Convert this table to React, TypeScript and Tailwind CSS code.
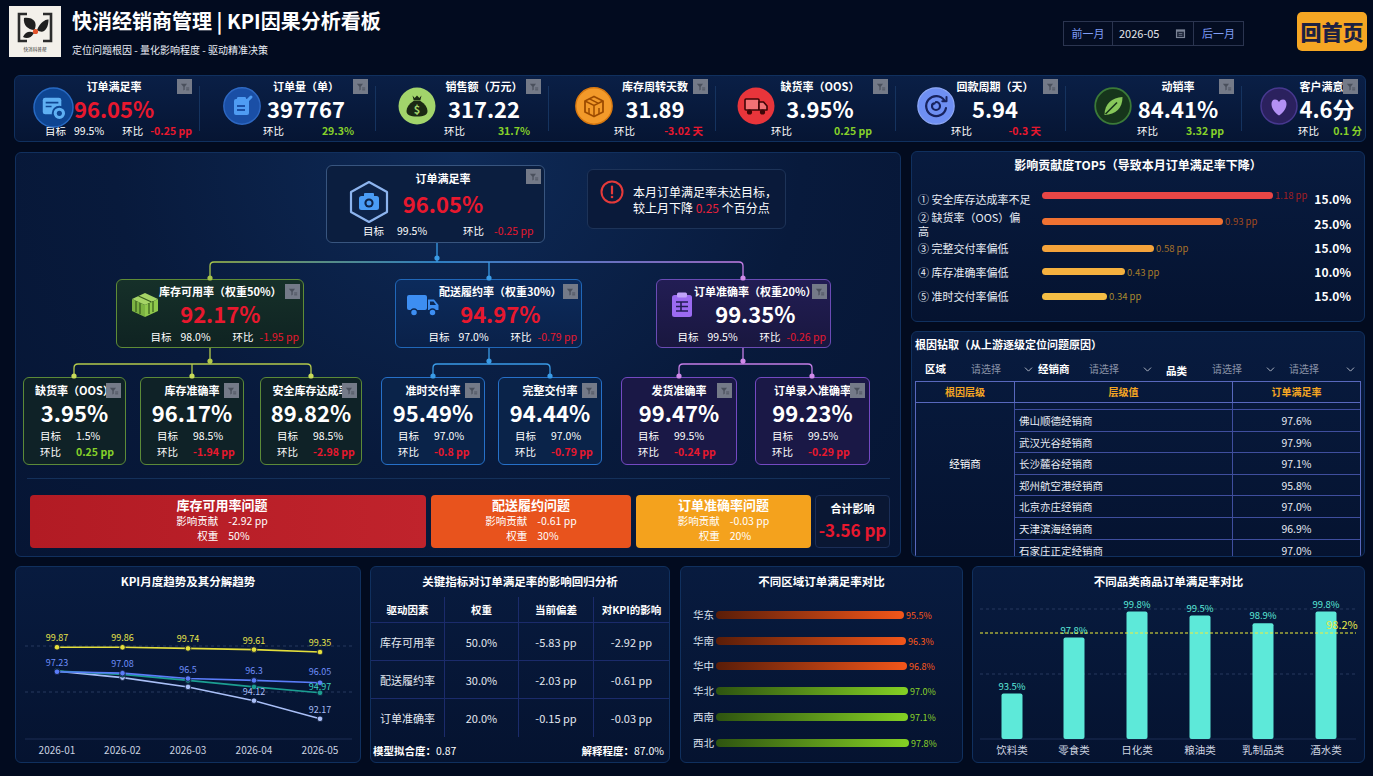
import { Fragment, type ReactNode } from "react";
import { ChevronDown } from "lucide-react";

type Tone = "red" | "green" | "white";

const toneText: Record<Tone, string> = {
  red: "text-[#e8182e]",
  green: "text-[#86d12a]",
  white: "text-white",
};

/* ---------- small drawings ---------- */

function FilterBadge({ className = "" }: { className?: string }) {
  return (
    <span className={`absolute flex h-[15px] w-[15px] items-center justify-center bg-[#747a88] ${className}`}>
      <svg viewBox="0 0 12 12" className="h-[10px] w-[10px]">
        <path d="M1 2.2h7.4L5.6 5.8v3.4l-1.5.9V5.8z" fill="#4a505c" />
        <path d="M7.4 7.2h3.6M7.4 9.4h3.6" stroke="#4a505c" strokeWidth="1.1" />
      </svg>
    </span>
  );
}

function Logo() {
  return (
    <div className="ml-[9px] mt-[6px] h-[51px] w-[52px] shrink-0 bg-[#f3f0ea]">
      <svg viewBox="0 0 52 51" className="h-full w-full">
        <path d="M18 8H10V35H18M34 8H42V35H34" stroke="#2b2b2b" strokeWidth="2.6" fill="none" />
        <path d="M15 12C24 11 29 16 25.5 24C18.5 23.5 14 19 15 12Z" fill="#1f1f1f" />
        <path d="M28 24C31 16 37 13 39.5 13.5C39.5 22 35 29 28 24Z" fill="#1f1f1f" />
        <path d="M14 31C16 26 21 24.5 25 27C22 32.5 17.5 33 14 31Z" fill="#1f1f1f" />
        <circle cx="26.5" cy="25.5" r="2.6" fill="#e4532b" />
        <text x="26" y="44.5" fontSize="4.6" textAnchor="middle" fill="#333">快消科普帮</text>
      </svg>
    </div>
  );
}

function CalendarGlyph() {
  return (
    <svg viewBox="0 0 12 12" className="h-[11px] w-[11px]">
      <rect x="1" y="1.5" width="10" height="9.5" fill="#7c8497" />
      <rect x="2.3" y="4" width="7.4" height="5.8" fill="#1f273b" />
      <path d="M4 6h4M4 8h4" stroke="#7c8497" strokeWidth="0.8" />
    </svg>
  );
}

const icoFulfil = (
  <svg viewBox="0 0 42 42" className="h-[41px] w-[41px]">
    <circle cx="21" cy="21" r="20" fill="#0e4592" stroke="#2769c2" strokeWidth="1.5" />
    <rect x="10" y="11" width="19" height="17" rx="2.5" fill="#5fb0f3" />
    <path d="M13 16h13M13 20h6" stroke="#0e4592" strokeWidth="1.7" />
    <circle cx="27" cy="27" r="6.8" fill="#5fb0f3" stroke="#0e4592" strokeWidth="2" />
    <circle cx="27" cy="27" r="2.6" fill="#0e4592" />
  </svg>
);

const icoOrders = (
  <svg viewBox="0 0 38 38" className="h-[38px] w-[38px]">
    <circle cx="19" cy="19" r="18.2" fill="#1a4fa6" stroke="#2e68c2" strokeWidth="1.4" />
    <rect x="11" y="12" width="15" height="16" rx="2" fill="#4f9cf3" />
    <rect x="14" y="10" width="9" height="4" rx="1.2" fill="#4f9cf3" />
    <path d="M14 19h8M14 23h8" stroke="#1a4fa6" strokeWidth="1.8" />
    <path d="M22.5 15.5l5.5-5.5" stroke="#4f9cf3" strokeWidth="3" strokeLinecap="round" />
  </svg>
);

const icoSales = (
  <svg viewBox="0 0 38 38" className="h-[38px] w-[38px]">
    <circle cx="19" cy="19" r="18.5" fill="#a2d46b" />
    <path d="M14.5 8.5l2.2 2.5 2.3-2.5 2.3 2.5 2.2-2.5-1.2 5h-6.6z" fill="#1c2914" />
    <path d="M15.5 14h7c4.5 3 7 6.5 7 10 0 4-3.5 5.5-10.5 5.5S8.5 28 8.5 24c0-3.5 2.5-7 7-10z" fill="#1c2914" />
    <text x="19" y="26.5" textAnchor="middle" fontSize="11" fontWeight="700" fill="#a2d46b">$</text>
  </svg>
);

const icoStock = (
  <svg viewBox="0 0 38 38" className="h-[38px] w-[38px]">
    <circle cx="19" cy="19" r="18.2" fill="#f39a2a" stroke="#d8780f" strokeWidth="1.4" />
    <path d="M10 14l9-4.5 9 4.5v11l-9 4.5-9-4.5z" fill="none" stroke="#9c4b00" strokeWidth="1.8" strokeLinejoin="round" />
    <path d="M10 14l9 4.5 9-4.5M19 18.5v11M14.5 11.8l9 4.5M14 21v6M24 21v6" fill="none" stroke="#9c4b00" strokeWidth="1.5" />
  </svg>
);

const icoTruckRed = (
  <svg viewBox="0 0 38 38" className="h-[38px] w-[38px]">
    <circle cx="19" cy="19" r="18.5" fill="#e8353b" />
    <rect x="8" y="12" width="14" height="11" rx="1" fill="#f27275" stroke="#3d0607" strokeWidth="1.6" />
    <path d="M22 15h4.5l3.5 4v4h-8z" fill="#f27275" stroke="#3d0607" strokeWidth="1.6" strokeLinejoin="round" />
    <circle cx="12.5" cy="25" r="2.6" fill="#3d0607" />
    <circle cx="25.5" cy="25" r="2.6" fill="#3d0607" />
  </svg>
);

const icoCycle = (
  <svg viewBox="0 0 38 38" className="h-[38px] w-[38px]">
    <circle cx="19" cy="19" r="18.2" fill="#6e8ff3" stroke="#8ea8f6" strokeWidth="1.2" />
    <path d="M27.5 13.5A10 10 0 1 0 29 21" fill="none" stroke="#18235e" strokeWidth="2.2" strokeLinecap="round" />
    <path d="M29.5 10v4.2h-4.2" fill="none" stroke="#18235e" strokeWidth="2" strokeLinecap="round" strokeLinejoin="round" />
    <path d="M19 15a4 4 0 1 1-4 4c0-1.6 1.2-2.6 2.6-2.6" fill="none" stroke="#18235e" strokeWidth="2.2" strokeLinecap="round" />
  </svg>
);

const icoLeaf = (
  <svg viewBox="0 0 38 38" className="h-[38px] w-[38px]">
    <circle cx="19" cy="19" r="17.8" fill="#16351b" stroke="#3b7a38" strokeWidth="1.8" />
    <path d="M10.5 28C10.5 17 18 10.5 28.5 10C28.5 21 22 27.5 10.5 28Z" fill="#87c75a" />
    <path d="M11.5 27L23 15.5" stroke="#16351b" strokeWidth="1.6" />
  </svg>
);

const icoHeart = (
  <svg viewBox="0 0 38 38" className="h-[38px] w-[38px]">
    <circle cx="19" cy="19" r="18" fill="#2b215e" stroke="#47388f" strokeWidth="1.5" />
    <path d="M19 28.5C9.5 22 10 12.5 15 12.5c2.2 0 3.4 1.3 4 2.6.6-1.3 1.8-2.6 4-2.6 5 0 5.5 9.5-4 16z" fill="#b391f4" />
  </svg>
);

const hexCamera = (
  <svg viewBox="0 0 44 44" className="h-[44px] w-[44px]">
    <path d="M22 2L40 12V32L22 42L4 32V12Z" fill="#0d2349" stroke="#8db4ee" strokeWidth="2.2" strokeLinejoin="round" />
    <rect x="12" y="16" width="20" height="14" rx="2.5" fill="#4a9cf5" />
    <rect x="17" y="13" width="10" height="4.5" rx="1" fill="#4a9cf5" />
    <circle cx="22" cy="23" r="4.6" fill="#0d2349" />
    <circle cx="22" cy="23" r="2.5" fill="#4a9cf5" />
  </svg>
);

const greenCrate = (
  <svg viewBox="0 0 28 26" className="h-[26px] w-[28px]">
    <path d="M14 1L27 7L14 13L1 7Z" fill="#a5d466" />
    <path d="M1 7L14 13V25L1 19Z" fill="#7cb342" />
    <path d="M14 13L27 7V19L14 25Z" fill="#8fc84c" />
    <path d="M5 9v11M9 11v11M18 11v11M22 9v11M7.5 4l13 6" stroke="#365a1c" strokeWidth="1.2" />
  </svg>
);

const blueTruck = (
  <svg viewBox="0 0 32 24" className="h-[24px] w-[32px]">
    <rect x="0" y="2" width="20" height="15" rx="2" fill="#3d8ef2" />
    <path d="M21 6.5H27L31.5 12V17H21Z" fill="#3d8ef2" />
    <path d="M23 8.5H26.5L29 12H23Z" fill="#0b2652" />
    <circle cx="7" cy="19.5" r="3.5" fill="#3d8ef2" stroke="#0b2652" strokeWidth="1.5" />
    <circle cx="25.5" cy="19.5" r="3.5" fill="#3d8ef2" stroke="#0b2652" strokeWidth="1.5" />
  </svg>
);

const purpleClip = (
  <svg viewBox="0 0 24 26" className="h-[26px] w-[24px]">
    <rect x="2" y="3" width="20" height="22" rx="2.5" fill="#9b6bf1" />
    <rect x="7" y="0.5" width="10" height="5" rx="1.5" fill="#c0a3fa" />
    <path d="M6 10h12M6 14.5h12M6 19h12M11 10v9" stroke="#221d55" strokeWidth="1.6" />
  </svg>
);

function AlertGlyph() {
  return (
    <svg viewBox="0 0 24 24" className="mt-[-4px] h-[24px] w-[24px] shrink-0">
      <circle cx="12" cy="12" r="10.5" stroke="#e53a3a" strokeWidth="2" fill="none" />
      <path d="M12 6.5v7" stroke="#e53a3a" strokeWidth="2.2" strokeLinecap="round" />
      <circle cx="12" cy="17" r="1.3" fill="#e53a3a" />
    </svg>
  );
}

/* ---------- header ---------- */

function Header() {
  return (
    <header className="flex h-[70px] items-start">
      <Logo />
      <div className="ml-[11px] mt-[8px]">
        <h1 className="text-[20px] font-bold leading-[26px]">快消经销商管理 | KPI因果分析看板</h1>
        <p className="mt-[9px] text-[10px] leading-[13px] text-[#e8ecf4]">定位问题根因 - 量化影响程度 - 驱动精准决策</p>
      </div>
      <div className="ml-auto mt-[21px] flex h-[25px] border border-[#2b3550] bg-[#040d22] text-[11px] leading-[23px]">
        <button className="w-[49px] border-r border-[#2b3550] text-center text-[#7f9cf5]">前一月</button>
        <div className="flex w-[81px] items-center justify-between border-r border-[#2b3550] pl-[6px] pr-[7px] text-[#e5e7eb]">
          2026-05
          <CalendarGlyph />
        </div>
        <button className="w-[49px] text-center text-[#7f9cf5]">后一月</button>
      </div>
      <button className="ml-[53px] mr-[6px] mt-[12px] h-[39px] w-[70px] rounded-[5px] bg-[#f5a623] text-[21px] font-black leading-[39px] text-[#1c2142]">
        回首页
      </button>
    </header>
  );
}

/* ---------- KPI strip ---------- */

type Kpi = {
  title: string;
  value: string;
  valueTone: Tone;
  target?: string;
  mom: string;
  momTone: Tone;
  icon: ReactNode;
  width: string;
  pad: string;
  col: string;
  bottom: string;
  shift: string;
};

const kpis: Kpi[] = [
  { title: "订单满足率", value: "96.05%", valueTone: "red", target: "99.5%", mom: "-0.25 pp", momTone: "red", icon: icoFulfil, width: "w-[184px]", pad: "pl-[18px]", col: "pr-[45px]", bottom: "pl-[30px] pr-[7px]", shift: "translate-y-[7px]" },
  { title: "订单量（单）", value: "397767", valueTone: "white", mom: "29.3%", momTone: "green", icon: icoOrders, width: "w-[175px]", pad: "pl-[23px]", col: "pr-[24px]", bottom: "pl-[63px] pr-[21px]", shift: "translate-y-[6px]" },
  { title: "销售额（万元）", value: "317.22", valueTone: "white", mom: "31.7%", momTone: "green", icon: icoSales, width: "w-[172px]", pad: "pl-[22px]", col: "pr-[16px]", bottom: "pl-[68px] pr-[18px]", shift: "translate-y-[6px]" },
  { title: "库存周转天数", value: "31.89", valueTone: "white", mom: "-3.02 天", momTone: "red", icon: icoStock, width: "w-[166px]", pad: "pl-[26px]", col: "pr-[18px]", bottom: "pl-[65px] pr-[12px]", shift: "translate-y-[6px]" },
  { title: "缺货率（OOS）", value: "3.95%", valueTone: "white", mom: "0.25 pp", momTone: "green", icon: icoTruckRed, width: "w-[179px]", pad: "pl-[21px]", col: "pr-[30px]", bottom: "pl-[55px] pr-[23px]", shift: "translate-y-[6px]" },
  { title: "回款周期（天）", value: "5.94", valueTone: "white", mom: "-0.3 天", momTone: "red", icon: icoCycle, width: "w-[169px]", pad: "pl-[21px]", col: "pr-[30px]", bottom: "pl-[55px] pr-[24px]", shift: "translate-y-[6px]" },
  { title: "动销率", value: "84.41%", valueTone: "white", mom: "3.32 pp", momTone: "green", icon: icoLeaf, width: "w-[175px]", pad: "pl-[28px]", col: "pr-[17px]", bottom: "pl-[71px] pr-[17px]", shift: "translate-y-[6px]" },
  { title: "客户满意度", value: "4.6分", valueTone: "white", mom: "0.1 分", momTone: "green", icon: icoHeart, width: "flex-1", pad: "pl-[18px]", col: "pr-[9px]", bottom: "pl-[56px] pr-[3px]", shift: "translate-y-[6px]" },
];

function KpiItem({ k }: { k: Kpi }) {
  return (
    <div className={`relative shrink-0 ${k.width}`}>
      <FilterBadge className="right-[7px] top-[3px]" />
      <div className={`flex items-center pt-[3px] ${k.pad}`}>
        <div className={`shrink-0 ${k.shift}`}>{k.icon}</div>
        <div className={`flex flex-1 flex-col items-center ${k.col}`}>
          <div className="whitespace-nowrap text-[11px] font-bold leading-[14px]">{k.title}</div>
          <div className={`mt-[2px] whitespace-nowrap text-[22px] font-bold leading-[26px] ${toneText[k.valueTone]}`}>{k.value}</div>
        </div>
      </div>
      <div className={`mt-[3px] flex h-[14px] items-center justify-between whitespace-nowrap text-[10.5px] leading-[14px] ${k.bottom}`}>
        {k.target ? (
          <>
            <span className="flex gap-[8px]">
              <span>目标</span>
              <span>{k.target}</span>
            </span>
            <span className="flex gap-[7px]">
              <span>环比</span>
              <span className={`font-bold ${toneText[k.momTone]}`}>{k.mom}</span>
            </span>
          </>
        ) : (
          <>
            <span>环比</span>
            <span className={`font-bold ${toneText[k.momTone]}`}>{k.mom}</span>
          </>
        )}
      </div>
    </div>
  );
}

function KpiStrip() {
  return (
    <div className="ml-[14px] mt-[5px] flex h-[67px] w-[1352px] overflow-hidden rounded-[6px] border border-[#10305e] bg-[linear-gradient(180deg,#0a1f46,#061533)]">
      {kpis.map((k, i) => (
        <Fragment key={k.title}>
          {i > 0 && <div className="my-[10px] w-px shrink-0 bg-[#15335f]" />}
          <KpiItem k={k} />
        </Fragment>
      ))}
    </div>
  );
}

/* ---------- causal tree ---------- */

type Frame = "green" | "blue" | "purple";

const branchFrame: Record<Frame, string> = {
  green: "border-[#5f8c36] bg-[linear-gradient(180deg,#163029,#0f2322)]",
  blue: "border-[#2067b8] bg-[linear-gradient(180deg,#0c2b5c,#0a2149)]",
  purple: "border-[#6b4bb5] bg-[linear-gradient(180deg,#221d54,#19173f)]",
};

const leafFrame: Record<Frame, string> = {
  green: "border-[#5c8a38] bg-[#0f2227]",
  blue: "border-[#2670c8] bg-[#0a2349]",
  purple: "border-[#7449c2] bg-[#1a1846]",
};

type Branch = {
  title: string;
  value: string;
  valueTone: Tone;
  target: string;
  mom: string;
  frame: Frame;
  icon: ReactNode;
  box: string;
  pad: string;
  col: string;
};

const branches: Branch[] = [
  { title: "库存可用率（权重50%）", value: "92.17%", valueTone: "red", target: "98.0%", mom: "-1.95 pp", frame: "green", icon: greenCrate, box: "ml-[100px] w-[188px]", pad: "pl-[14px]", col: "pr-[22px]" },
  { title: "配送履约率（权重30%）", value: "94.97%", valueTone: "red", target: "97.0%", mom: "-0.79 pp", frame: "blue", icon: blueTruck, box: "ml-[91px] w-[187px]", pad: "pl-[11px]", col: "pr-[22px]" },
  { title: "订单准确率（权重20%）", value: "99.35%", valueTone: "white", target: "99.5%", mom: "-0.26 pp", frame: "purple", icon: purpleClip, box: "ml-[74px] w-[175px]", pad: "pl-[13px]", col: "pr-[26px]" },
];

function BranchCard({ c }: { c: Branch }) {
  return (
    <div className={`relative flex h-[69px] shrink-0 flex-col rounded-[6px] border ${branchFrame[c.frame]} ${c.box}`}>
      <FilterBadge className="right-[3px] top-[4px]" />
      <div className={`flex items-center pt-[4px] ${c.pad}`}>
        <div className="shrink-0">{c.icon}</div>
        <div className={`flex flex-1 flex-col items-center ${c.col}`}>
          <div className="whitespace-nowrap text-[11px] font-bold leading-[14px]">{c.title}</div>
          <div className={`mt-[2px] text-[22px] font-bold leading-[26px] ${toneText[c.valueTone]}`}>{c.value}</div>
        </div>
      </div>
      <div className="mt-[4px] flex justify-end whitespace-nowrap pr-[4px] text-[10.5px] leading-[14px]">
        <span>目标</span>
        <span className="ml-[9px]">{c.target}</span>
        <span className="ml-[22px]">环比</span>
        <span className={`ml-[6px] ${toneText.red}`}>{c.mom}</span>
      </div>
    </div>
  );
}

type Leaf = { title: string; value: string; target: string; mom: string; momTone: Tone; frame: Frame; box: string };

const leaves: Leaf[] = [
  { title: "缺货率（OOS）", value: "3.95%", target: "1.5%", mom: "0.25 pp", momTone: "green", frame: "green", box: "ml-[7px] w-[103px]" },
  { title: "库存准确率", value: "96.17%", target: "98.5%", mom: "-1.94 pp", momTone: "red", frame: "green", box: "ml-[14px] w-[104px]" },
  { title: "安全库存达成率", value: "89.82%", target: "98.5%", mom: "-2.98 pp", momTone: "red", frame: "green", box: "ml-[16px] w-[102px]" },
  { title: "准时交付率", value: "95.49%", target: "97.0%", mom: "-0.8 pp", momTone: "red", frame: "blue", box: "ml-[19px] w-[104px]" },
  { title: "完整交付率", value: "94.44%", target: "97.0%", mom: "-0.79 pp", momTone: "red", frame: "blue", box: "ml-[13px] w-[104px]" },
  { title: "发货准确率", value: "99.47%", target: "99.5%", mom: "-0.24 pp", momTone: "red", frame: "purple", box: "ml-[19px] w-[116px]" },
  { title: "订单录入准确率", value: "99.23%", target: "99.5%", mom: "-0.29 pp", momTone: "red", frame: "purple", box: "ml-[18px] w-[115px]" },
];

function LeafCard({ c }: { c: Leaf }) {
  return (
    <div className={`relative flex h-[88px] shrink-0 flex-col rounded-[6px] border ${leafFrame[c.frame]} ${c.box}`}>
      <FilterBadge className="right-[4px] top-[5px]" />
      <div className="mt-[5px] whitespace-nowrap text-center text-[11px] font-bold leading-[14px]">{c.title}</div>
      <div className="mt-[2px] text-center text-[22px] font-bold leading-[26px]">{c.value}</div>
      <div className="mt-[4px] flex whitespace-nowrap pl-[16px] text-[10.5px] leading-[14px]">
        <span className="w-[36px]">目标</span>
        <span>{c.target}</span>
      </div>
      <div className="mt-[2px] flex whitespace-nowrap pl-[16px] text-[10.5px] leading-[14px]">
        <span className="w-[36px]">环比</span>
        <span className={`font-bold ${toneText[c.momTone]}`}>{c.mom}</span>
      </div>
    </div>
  );
}

function IssueBar({ title, contrib, weight, className }: { title: string; contrib: string; weight: string; className: string }) {
  return (
    <div className={`flex h-[53px] shrink-0 flex-col items-center rounded-[4px] ${className}`}>
      <div className="mt-[1px] text-[13px] font-bold leading-[17px]">{title}</div>
      <div className="grid grid-cols-[auto_auto] gap-x-[10px] text-[10.5px] leading-[15px]">
        <span className="text-right">影响贡献</span>
        <span>{contrib}</span>
        <span className="text-right">权重</span>
        <span>{weight}</span>
      </div>
    </div>
  );
}

function Connectors() {
  const dot = (x: number, y: number, c: string) => <circle cx={x} cy={y} r="2.6" fill={c} />;
  return (
    <svg className="pointer-events-none absolute inset-0 h-full w-full" viewBox="16 153 884 403" fill="none" strokeWidth="1.3">
      <defs>
        <linearGradient id="bus" gradientUnits="userSpaceOnUse" x1="210" y1="0" x2="743" y2="0">
          <stop offset="0" stopColor="#a7c34a" />
          <stop offset="0.43" stopColor="#3a9be6" />
          <stop offset="1" stopColor="#c47de6" />
        </linearGradient>
      </defs>
      <path d="M437 243V262" stroke="#3a9be6" />
      <path d="M210 279V266Q210 262 214 262H739Q743 262 743 266V279" stroke="url(#bus)" />
      <path d="M489 262V279" stroke="#3a9be6" />
      {dot(437, 258, "#3a9be6")}
      {dot(210, 278, "#a7c34a")}
      {dot(489, 278, "#3a9be6")}
      {dot(743, 278, "#d08aea")}

      <path d="M210 348V364M74 377V368Q74 364 78 364H307Q311 364 311 368V377M192 364V377" stroke="#b3c94b" />
      {dot(210, 361, "#b3c94b")}
      {dot(74, 376, "#c9db5a")}
      {dot(192, 376, "#c9db5a")}
      {dot(311, 376, "#c9db5a")}

      <path d="M489 348V364M433 377V368Q433 364 437 364H546Q550 364 550 368V377" stroke="#3a9be6" />
      {dot(489, 361, "#3a9be6")}
      {dot(433, 376, "#3a9be6")}
      {dot(550, 376, "#3a9be6")}

      <path d="M743 348V364M679 377V368Q679 364 683 364H808Q812 364 812 368V377" stroke="#c47de6" />
      {dot(743, 361, "#d08aea")}
      {dot(679, 376, "#d08aea")}
      {dot(812, 376, "#d08aea")}
    </svg>
  );
}

function CausalTree() {
  return (
    <section className="relative ml-[15px] h-[405px] w-[886px] shrink-0 rounded-[6px] border border-[#11305e] bg-[radial-gradient(ellipse_at_50%_0%,#0e2a57_0%,#081a3c_55%,#061534_100%)]">
      <div className="flex items-start pt-[12px]">
        <div className="relative ml-[310px] flex h-[78px] w-[219px] shrink-0 flex-col rounded-[6px] border border-[#38557f] bg-[#0b1e3f]">
          <FilterBadge className="right-[3px] top-[3px]" />
          <div className="flex pl-[20px] pt-[5px]">
            <div className="mt-[9px] shrink-0">{hexCamera}</div>
            <div className="flex flex-1 flex-col items-center pr-[49px]">
              <div className="text-[11px] font-bold leading-[14px]">订单满足率</div>
              <div className={`mt-[5px] text-[22px] font-bold leading-[26px] ${toneText.red}`}>96.05%</div>
            </div>
          </div>
          <div className="flex whitespace-nowrap pl-[36px] text-[10.5px] leading-[14px]">
            <span>目标</span>
            <span className="ml-[13px]">99.5%</span>
            <span className="ml-[36px]">环比</span>
            <span className={`ml-[10px] ${toneText.red}`}>-0.25 pp</span>
          </div>
        </div>
        <div className="ml-[42px] mt-[4px] flex h-[60px] w-[199px] shrink-0 rounded-[6px] border border-[#1d3358] bg-[#0a1a3a] pl-[12px] pt-[14px]">
          <AlertGlyph />
          <p className="ml-[9px] whitespace-nowrap text-[12px] leading-[16px]">
            本月订单满足率未达目标，
            <br />
            较上月下降 <span className="text-[#e8213a]">0.25</span> 个百分点
          </p>
        </div>
      </div>

      <div className="mt-[36px] flex items-start">
        {branches.map((b) => (
          <BranchCard key={b.title} c={b} />
        ))}
      </div>

      <div className="mt-[29px] flex items-start">
        {leaves.map((l) => (
          <LeafCard key={l.title} c={l} />
        ))}
      </div>

      <div className="ml-[11px] mt-[13px] h-px w-[863px] bg-[#14305a]" />

      <div className="mt-[16px] flex items-start">
        <IssueBar title="库存可用率问题" contrib="-2.92 pp" weight="50%" className="ml-[14px] w-[396px] bg-[linear-gradient(90deg,#b21b24,#c0232c)] pr-[12px]" />
        <IssueBar title="配送履约问题" contrib="-0.61 pp" weight="30%" className="ml-[5px] w-[200px] bg-[#e8531d]" />
        <IssueBar title="订单准确率问题" contrib="-0.03 pp" weight="20%" className="ml-[5px] w-[175px] bg-[#f4a21d]" />
        <div className="ml-[4px] flex h-[53px] w-[75px] shrink-0 flex-col items-center rounded-[4px] border border-[#1b2e57] bg-[#0a1733] pt-[4px]">
          <div className="text-[11px] font-bold leading-[16px]">合计影响</div>
          <div className="mt-[3px] whitespace-nowrap text-[17px] font-bold leading-[22px] text-[#e8182e]">-3.56 pp</div>
        </div>
      </div>

      <Connectors />
    </section>
  );
}

/* ---------- right column ---------- */

type TopRow = { label: ReactNode; h: string; bar: string; shift: string; val: string; valCls: string; pct: string };

const top5: TopRow[] = [
  { label: "① 安全库存达成率不足", h: "h-[24px]", bar: "w-[231px] bg-[#e84646]", shift: "-translate-y-[4px]", val: "1.18 pp", valCls: "text-[#a31f24]", pct: "15.0%" },
  { label: <>② 缺货率（OOS）偏<br />高</>, h: "h-[26px]", bar: "w-[181px] bg-[#f07232]", shift: "-translate-y-[3px]", val: "0.93 pp", valCls: "text-[#a44b1e]", pct: "25.0%" },
  { label: "③ 完整交付率偏低", h: "h-[22px]", bar: "w-[112px] bg-[#f4a33b]", shift: "", val: "0.58 pp", valCls: "text-[#a8742a]", pct: "15.0%" },
  { label: "④ 库存准确率偏低", h: "h-[25px]", bar: "w-[83px] bg-[#f5b13f]", shift: "", val: "0.43 pp", valCls: "text-[#a87d2a]", pct: "10.0%" },
  { label: "⑤ 准时交付率偏低", h: "h-[24px]", bar: "w-[65px] bg-[#f5be45]", shift: "", val: "0.34 pp", valCls: "text-[#a88a30]", pct: "15.0%" },
];

function Top5() {
  return (
    <section className="h-[171px] shrink-0 rounded-[6px] border border-[#10305e] bg-[linear-gradient(180deg,#081b3f,#051330)] pt-[5px]">
      <h3 className="text-center text-[12px] font-bold leading-[16px]">影响贡献度TOP5（导致本月订单满足率下降）</h3>
      <div className="mt-[14px] pl-[6px] pr-[13px]">
        {top5.map((r) => (
          <div key={r.val} className={`flex items-center ${r.h}`}>
            <div className="w-[124px] shrink-0 whitespace-nowrap text-[11px] leading-[14px] text-[#e8ecf4]">{r.label}</div>
            <div className={`flex items-center ${r.shift}`}>
              <div className={`h-[7px] rounded-full ${r.bar}`} />
              <span className={`ml-[2px] text-[9.5px] leading-[12px] ${r.valCls}`}>{r.val}</span>
            </div>
            <div className="ml-auto text-[12px] font-bold leading-[14px]">{r.pct}</div>
          </div>
        ))}
      </div>
    </section>
  );
}

const dealers: [string, string][] = [
  ["佛山顺德经销商", "97.6%"],
  ["武汉光谷经销商", "97.9%"],
  ["长沙麓谷经销商", "97.1%"],
  ["郑州航空港经销商", "95.8%"],
  ["北京亦庄经销商", "97.0%"],
  ["天津滨海经销商", "96.9%"],
  ["石家庄正定经销商", "97.0%"],
];

function Picker({ label, labelCls, boxCls, chevCls }: { label?: string; labelCls?: string; boxCls: string; chevCls: string }) {
  return (
    <>
      {label && <span className={`shrink-0 text-[10.5px] font-bold ${labelCls}`}>{label}</span>}
      <span className={`shrink-0 text-[10px] text-[#8a93a8] ${boxCls}`}>请选择</span>
      <span className={`flex shrink-0 items-center ${chevCls}`}>
        <ChevronDown size={13} strokeWidth={1.6} color="#c6ccd8" />
      </span>
    </>
  );
}

function RootDrill() {
  return (
    <section className="mt-[9px] h-[226px] shrink-0 overflow-hidden rounded-[6px] border border-[#10305e] bg-[linear-gradient(180deg,#081b3f,#051330)] pl-[3px] pt-[4px]">
      <h3 className="text-[11px] font-bold leading-[16px]">根因钻取（从上游逐级定位问题原因）</h3>
      <div className="mt-[10px] flex h-[14px] items-center pl-[10px] leading-[14px]">
        <Picker label="区域" labelCls="w-[46px]" boxCls="w-[51px]" chevCls="w-[16px]" />
        <Picker label="经销商" labelCls="w-[51px]" boxCls="w-[52px]" chevCls="w-[25px]" />
        <Picker label="品类" labelCls="w-[46px] translate-y-[2px]" boxCls="w-[52px]" chevCls="w-[25px]" />
        <Picker boxCls="w-[55px]" chevCls="w-[16px]" />
      </div>
      <div className="mt-[5px] grid w-[446px] grid-cols-[99px_218px_1fr] border border-[#5868bd] text-[10px]">
        <div className="h-[21px] border-b border-r border-[#5868bd] text-center font-bold leading-[20px] text-[#f5a623]">根因层级</div>
        <div className="h-[21px] border-b border-r border-[#5868bd] text-center font-bold leading-[20px] text-[#f5a623]">层级值</div>
        <div className="h-[21px] border-b border-[#5868bd] text-center font-bold leading-[20px] text-[#f5a623]">订单满足率</div>
        <div className="row-span-8 border-r border-[#3f4e9e] pt-[54px] text-center text-[10.5px] leading-[14px]">经销商</div>
        <div className="h-[7px] border-b border-r border-[#3f4e9e]" />
        <div className="h-[7px] border-b border-[#3f4e9e]" />
        {dealers.map(([n, v]) => (
          <Fragment key={n}>
            <div className="h-[21.6px] border-b border-r border-[#3f4e9e] pl-[4px] text-[10.5px] leading-[21px] text-[#e8ecf4]">{n}</div>
            <div className="h-[21.6px] border-b border-[#3f4e9e] text-center text-[10.5px] leading-[21px] text-[#e8ecf4]">{v}</div>
          </Fragment>
        ))}
      </div>
    </section>
  );
}

/* ---------- bottom charts ---------- */

function Panel({ title, className, children }: { title: string; className: string; children: ReactNode }) {
  return (
    <section className={`h-[197px] shrink-0 overflow-hidden rounded-[6px] border border-[#10305e] bg-[linear-gradient(180deg,#081b3f,#051330)] ${className}`}>
      <h3 className="h-[29px] pt-[6px] text-center text-[11.5px] font-bold leading-[16px]">{title}</h3>
      {children}
    </section>
  );
}

const months = ["2026-01", "2026-02", "2026-03", "2026-04", "2026-05"];
const monthX = [57, 122.5, 188, 254, 320];
const trendY = (v: number) => 646 + (100 - v) * 9.3;

// label offsets above each point (the last two labels of month 5 sit close together)
const series = [
  { line: "#a9bff7", text: "#a9bdf5", data: [97.3, 96.6, 95.6, 94.12, 92.17], show: [3, 4], lift: [6, 6, 6, 6, 6] },
  { line: "#1c9e92", text: "#3dd2c2", data: [97.3, 96.95, 96.3, 95.6, 94.97], show: [4], lift: [6, 6, 6, 6, 3] },
  { line: "#5a7cf8", text: "#6f8ffb", data: [97.23, 97.08, 96.5, 96.3, 96.05], show: [0, 1, 2, 3, 4], lift: [6, 6, 6, 6, 8] },
  { line: "#e4df3c", text: "#e8e44a", data: [99.87, 99.86, 99.74, 99.61, 99.35], show: [0, 1, 2, 3, 4], lift: [6, 6, 6, 6, 6] },
];

function TrendPanel() {
  return (
    <Panel title="KPI月度趋势及其分解趋势" className="w-[346px]">
      <svg viewBox="16 596 344 166" className="h-[166px] w-[344px]">
        <path d="M25 646H352M25 692H352" stroke="#26395f" strokeDasharray="3 3" />
        <path d="M25 739H352" stroke="#1d2d55" />
        {series.map((s) => (
          <g key={s.line}>
            <polyline points={s.data.map((v, i) => `${monthX[i]},${trendY(v)}`).join(" ")} fill="none" stroke={s.line} strokeWidth="1.6" />
            {s.data.map((v, i) => (
              <circle key={i} cx={monthX[i]} cy={trendY(v)} r="2.8" fill={s.line} stroke="#0b1733" strokeWidth="0.8" />
            ))}
          </g>
        ))}
        {series.map((s) =>
          s.show.map((i) => (
            <text key={`${s.line}-${i}`} x={monthX[i]} y={trendY(s.data[i]) - s.lift[i]} fontSize="9" textAnchor="middle" fill={s.text}>
              {String(s.data[i])}
            </text>
          ))
        )}
        {months.map((m, i) => (
          <text key={m} x={monthX[i]} y="754" fontSize="10" textAnchor="middle" fill="#cbd3e1">
            {m}
          </text>
        ))}
      </svg>
    </Panel>
  );
}

const regression = [
  ["库存可用率", "50.0%", "-5.83 pp", "-2.92 pp"],
  ["配送履约率", "30.0%", "-2.03 pp", "-0.61 pp"],
  ["订单准确率", "20.0%", "-0.15 pp", "-0.03 pp"],
];

function RegressionPanel() {
  return (
    <Panel title="关键指标对订单满足率的影响回归分析" className="ml-[9px] w-[300px]">
      <div className="mt-[1px] grid grid-cols-[74px_74px_75px_75px]">
        {["驱动因素", "权重", "当前偏差", "对KPI的影响"].map((h, i) => (
          <div key={h} className={`h-[26px] border-b border-[#1b2b6b] text-center text-[10.5px] font-bold leading-[26px] ${i < 3 ? "border-r" : ""}`}>
            {h}
          </div>
        ))}
        {regression.map((r, ri) =>
          r.map((c, ci) => (
            <div
              key={`${ri}-${ci}`}
              className={`h-[38px] border-[#1b2b6b] text-center text-[11px] leading-[38px] text-[#e3e8f0] ${ci < 3 ? "border-r" : ""} ${ri < 2 ? "border-b" : ""}`}
            >
              {c}
            </div>
          ))
        )}
      </div>
      <div className="mt-[6px] flex justify-between pl-[2px] pr-[5px] text-[10.5px] leading-[16px]">
        <span>
          <b>模型拟合度：</b>0.87
        </span>
        <span>
          <b>解释程度：</b>87.0%
        </span>
      </div>
    </Panel>
  );
}

const regions = [
  { n: "华东", v: "95.5%", end: 904, y: 615, hot: true },
  { n: "华南", v: "96.3%", end: 906, y: 641, hot: true },
  { n: "华中", v: "96.8%", end: 907, y: 666, hot: true },
  { n: "华北", v: "97.0%", end: 908, y: 691, hot: false },
  { n: "西南", v: "97.1%", end: 908, y: 717, hot: false },
  { n: "西北", v: "97.8%", end: 909, y: 743, hot: false },
];

function RegionPanel() {
  return (
    <Panel title="不同区域订单满足率对比" className="ml-[10px] w-[283px]">
      <svg viewBox="681 596 281 166" className="h-[166px] w-[281px]">
        <defs>
          <linearGradient id="gOr" x1="0" x2="1" y1="0" y2="0">
            <stop offset="0" stopColor="#5a1d08" />
            <stop offset="1" stopColor="#f2561a" />
          </linearGradient>
          <linearGradient id="gGr" x1="0" x2="1" y1="0" y2="0">
            <stop offset="0" stopColor="#2e5410" />
            <stop offset="1" stopColor="#84d024" />
          </linearGradient>
        </defs>
        {regions.map((r) => (
          <g key={r.n}>
            <text x="693" y={r.y + 4} fontSize="10.5" fill="#dbe2ee">
              {r.n}
            </text>
            <rect x="716" y={r.y - 4} width={r.end - 716} height="8" rx="4" fill={r.hot ? "url(#gOr)" : "url(#gGr)"} />
            <text x={r.end + 2} y={r.y + 3.5} fontSize="9" fill={r.hot ? "#ff5a1a" : "#8bd42a"}>
              {r.v}
            </text>
          </g>
        ))}
      </svg>
    </Panel>
  );
}

const categories = [
  { n: "饮料类", v: 93.5, x: 1012 },
  { n: "零食类", v: 97.8, x: 1074 },
  { n: "日化类", v: 99.8, x: 1137 },
  { n: "粮油类", v: 99.5, x: 1200 },
  { n: "乳制品类", v: 98.9, x: 1263 },
  { n: "酒水类", v: 99.8, x: 1326 },
];
const catY = (v: number) => 609 + (100 - v) * 13;

function CategoryPanel() {
  return (
    <Panel title="不同品类商品订单满足率对比" className="ml-[9px] w-[393px]">
      <svg viewBox="973 596 391 166" className="h-[166px] w-[391px]">
        <path d="M980 609H1356M980 674H1356" stroke="#26395f" strokeDasharray="3 3" />
        <path d="M980 739H1356" stroke="#1d2d55" />
        {categories.map((c) => (
          <g key={c.n}>
            <rect x={c.x - 10.5} y={catY(c.v)} width="21" height={739 - catY(c.v)} rx="2" fill="#5de9d9" />
            <text x={c.x} y={catY(c.v) - 4} fontSize="9.5" textAnchor="middle" fill="#5de9d9">
              {c.v.toFixed(1)}%
            </text>
            <text x={c.x} y="754" fontSize="10.5" textAnchor="middle" fill="#d0d6e2">
              {c.n}
            </text>
          </g>
        ))}
        <path d="M980 633H1356" stroke="#f2ef3a" strokeWidth="1.2" strokeDasharray="3 2" />
        <text x="1342" y="629" fontSize="11" textAnchor="middle" fill="#e8e84a">
          98.2%
        </text>
      </svg>
    </Panel>
  );
}

/* ---------- page ---------- */

export default function App() {
  return (
    <div className="h-[776px] w-[1373px] overflow-hidden bg-[#020b1f] font-['Noto_Sans_CJK_SC','Noto_Sans',sans-serif] text-white">
      <Header />
      <KpiStrip />
      <div className="mt-[10px] flex items-start">
        <CausalTree />
        <div className="ml-[10px] mt-[-1px] flex w-[454px] flex-col">
          <Top5 />
          <RootDrill />
        </div>
      </div>
      <div className="ml-[15px] mt-[9px] flex items-start">
        <TrendPanel />
        <RegressionPanel />
        <RegionPanel />
        <CategoryPanel />
      </div>
    </div>
  );
}
